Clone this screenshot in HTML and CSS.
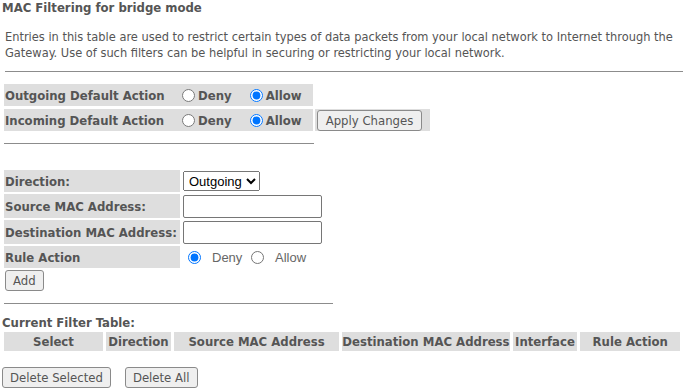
FILE: index.html
```html
<!DOCTYPE html>
<html>
<head>
  <meta charset="UTF-8" />
  <title>MAC Filtering</title>
  <link rel="stylesheet" href="styles.css">
</head>
<body>
  <div class="intro">
    <h2 class="page-title">MAC Filtering for bridge mode</h2>
    <p class="page-desc">Entries in this table are used to restrict certain types of data packets from your local network to Internet through the Gateway. Use of such filters can be helpful in securing or restricting your local network.</p>
  </div>
  <hr class="line-full">

  <form>
    <!-- Действия по умолчанию -->
    <table class="default-table">
      <tr>
        <td class="gray-cell">
          <span class="action-name">Outgoing Default Action</span>
          <label class="opt"><input type="radio" name="outAct" value="0">Deny</label>
          <label class="opt"><input type="radio" name="outAct" value="1" checked>Allow</label>
        </td>
      </tr>
      <tr>
        <td class="gray-cell">
          <span class="action-name">Incoming Default Action</span>
          <label class="opt"><input type="radio" name="inAct" value="0">Deny</label>
          <label class="opt"><input type="radio" name="inAct" value="1" checked>Allow</label>
        </td>
        <td class="gray-cell apply-cell"><button type="button" class="btn">Apply Changes</button></td>
      </tr>
    </table>
    <hr class="line-short">

    <!-- Новое правило -->
    <table class="rule-table">
      <tr>
        <th>Direction:</th>
        <td>
          <select class="dir-select">
            <option>Outgoing</option>
            <option>Incoming</option>
          </select>
        </td>
      </tr>
      <tr>
        <th>Source MAC Address:</th>
        <td class="mac-cell"><input type="text" class="mac-input" maxlength="17"></td>
      </tr>
      <tr>
        <th>Destination MAC Address:</th>
        <td class="mac-cell"><input type="text" class="mac-input" maxlength="17"></td>
      </tr>
      <tr>
        <th>Rule Action</th>
        <td class="rule-opts">
          <label><input type="radio" name="ruleAct" value="0" checked>Deny</label>
          <label><input type="radio" name="ruleAct" value="1">Allow</label>
        </td>
      </tr>
    </table>
    <button type="button" class="btn add-btn">Add</button>
    <hr class="line-mid">

    <!-- Текущие правила -->
    <div class="table-title">Current Filter Table:</div>
    <table class="filter-table">
      <tr>
        <th class="col-select">Select</th>
        <th class="col-dir">Direction</th>
        <th class="col-src">Source MAC Address</th>
        <th class="col-dst">Destination MAC Address</th>
        <th class="col-if">Interface</th>
        <th class="col-act">Rule Action</th>
      </tr>
    </table>
    <div class="bottom-btns">
      <button type="button" class="btn">Delete Selected</button>
      <button type="button" class="btn">Delete All</button>
    </div>
  </form>
</body>
</html>
```

FILE: styles.css
```css
body {
  margin: 0;
  padding: 0 2px;
  font-family: Tahoma, "DejaVu Sans", sans-serif;
  font-stretch: condensed;
  font-size: 13px;
  color: #555;
  background: #fff;
}

.page-title {
  margin: 0;
  font-size: 13px;
  line-height: 16px;
}

.page-desc {
  margin: 13px 0 0;
  padding: 0 0 0 3px;
  font-size: 12.7px;
  line-height: 16px;
}

hr {
  border: none;
  border-top: 1px solid #8c8c8c;
  margin: 0;
}

.line-full {
  margin: 10px 0 0 3px;
}

.line-short {
  width: 310px;
  margin: 9px 0 0 2px;
}

.line-mid {
  width: 329px;
  margin: 12px 0 0 2px;
}

table {
  border-spacing: 2px 3px;
}

.default-table {
  margin-top: 9px;
}

.gray-cell {
  background: #dedede;
  height: 22px;
  padding: 0 1px;
  font-weight: bold;
  white-space: nowrap;
}

.action-name {
  display: inline-block;
  width: 173px;
}

.opt {
  margin-right: 14px;
}

.opt:last-child {
  margin-right: 10px;
}

.opt input {
  margin: 0 3px 0 0;
  vertical-align: -2px;
}

.apply-cell {
  padding: 0 8px 0 2px;
}

.btn {
  font-family: Tahoma, "DejaVu Sans", sans-serif;
  font-stretch: condensed;
  font-size: 13px;
  color: #555;
  background: #efefef;
  border: 1px solid #8a8a8a;
  border-radius: 3px;
  height: 21px;
  padding: 0 7px;
}

.apply-cell .btn {
  padding: 0 8px;
}

.rule-table {
  margin-top: 24px;
  border-spacing: 2px;
}

.rule-table th {
  background: #dedede;
  text-align: left;
  width: 174px;
  height: 22px;
  padding: 0 1px;
  white-space: nowrap;
}

.rule-table td {
  padding: 0 1px;
}

.rule-table .mac-cell {
  padding-top: 1px;
}

.dir-select {
  font-family: "Liberation Sans", Arial, sans-serif;
  font-size: 13px;
  height: 20px;
  padding: 0 1px;
}

.mac-input {
  display: block;
  width: 139px;
  height: 23px;
  box-sizing: border-box;
  margin: 0;
  border: 1px solid #767676;
  border-radius: 2px;
}

.rule-opts {
  font-family: "Liberation Sans", Arial, sans-serif;
  font-stretch: normal;
  color: #666;
}

.rule-opts input {
  margin: 0 11px 0 5px;
  vertical-align: -2px;
}

.add-btn {
  margin: 0 0 0 3px;
}

.table-title {
  margin-top: 11px;
  font-weight: bold;
}

.filter-table {
  border-spacing: 3px 2px;
  margin-left: -1px;
}

.filter-table th {
  background: #dedede;
  height: 19px;
  padding: 0;
  white-space: nowrap;
}

.col-select { width: 100px; }
.col-dir { width: 65px; }
.col-src { width: 166px; }
.col-dst { width: 167px; }
.col-if { width: 65px; }
.col-act { width: 100px; }

.bottom-btns {
  margin-top: 14px;
  display: flex;
  gap: 14px;
}
```
